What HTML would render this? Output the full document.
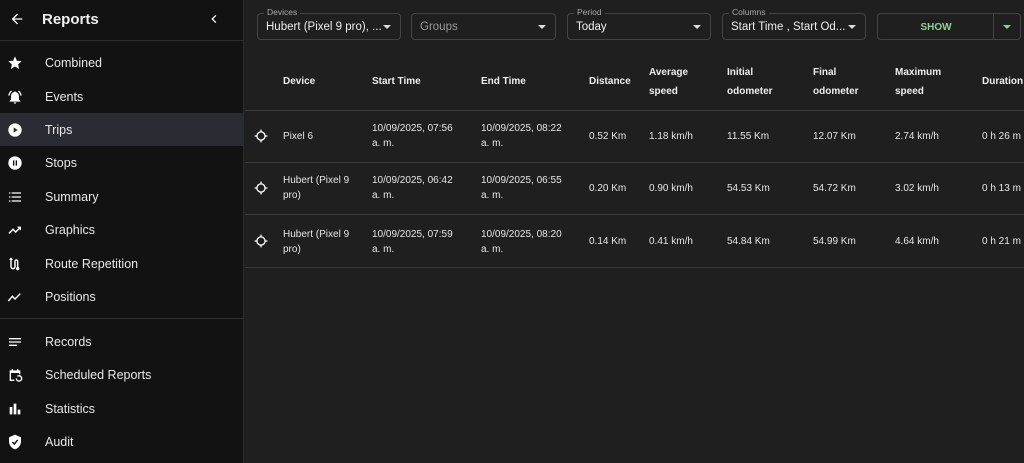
<!DOCTYPE html>
<html><head><meta charset="utf-8"><style>
*{margin:0;padding:0;box-sizing:border-box}
body{width:1024px;height:463px;overflow:hidden;background:#1f1f1f;font-family:"Liberation Sans",sans-serif;color:#eee;position:relative}
.sb{position:absolute;left:0;top:0;width:244px;height:463px;background:#121212;border-right:1px solid #2a2a2a}
.a{position:absolute}
.nav{position:absolute;left:0;width:244px;height:33px;font-size:12.5px;color:#e8e8e8}
.nav span{position:absolute;left:45px;top:10px}
.nav svg{position:absolute;left:7px;top:9px}
.sel{background:#2b2b33}
.hr{position:absolute;height:1px;background:#2e2e2e}
.f{position:absolute;top:13px;height:27px;border:1px solid #444;border-radius:4px}
.f .l{position:absolute;top:-7px;left:6px;font-size:8.5px;color:#aaa;background:#1f1f1f;padding:0 3px}
.f .v{position:absolute;left:8px;top:7px;font-size:11.5px;color:#eee;white-space:nowrap}
.f .c{position:absolute;right:9px;top:11px;width:0;height:0;border-left:4px solid transparent;border-right:4px solid transparent;border-top:4px solid #ddd}
.th{position:absolute;font-size:10px;font-weight:bold;color:#eee;line-height:19px}
.td{position:absolute;font-size:10px;color:#e6e6e6;line-height:15px}
</style></head><body>
<div class="sb">
<svg class="a" style="left:9px;top:11px" width="16" height="16" viewBox="0 0 24 24"><path d="M20 11H7.8l5.6-5.6L12 4l-8 8 8 8 1.4-1.4L7.8 13H20z" fill="#fff"/></svg>
<div class="a" style="left:42px;top:11px;font-size:15px;font-weight:bold;color:#f0f0f0">Reports</div>
<svg class="a" style="left:206px;top:11px" width="16" height="16" viewBox="0 0 24 24"><path d="M15.4 7.4 14 6l-6 6 6 6 1.4-1.4L10.8 12z" fill="#fff"/></svg>
<div class="hr" style="left:0;top:40px;width:244px"></div>
<div class="nav" style="top:46px"><svg width="16" height="16" viewBox="0 0 24 24"><path d="M12 17.3 18.2 21l-1.6-7L22 9.2l-7.2-.6L12 2 9.2 8.6 2 9.2 7.4 14l-1.6 7z" fill="#fff"/></svg><span>Combined</span></div>
<div class="nav" style="top:80px"><svg width="16" height="16" viewBox="0 0 24 24"><path d="M12 22c1.1 0 2-.9 2-2h-4c0 1.1.9 2 2 2zm6-6v-5c0-3.1-1.6-5.6-4.5-6.3V4h-3v.7C7.6 5.4 6 7.9 6 11v5l-2 2v1h16v-1zM7.6 3.6 6.2 2.2C3.8 4 2.2 6.8 2 10h2c.2-2.6 1.5-5 3.6-6.4zM20 10h2c-.2-3.2-1.8-6-4.2-7.8l-1.4 1.4c2.1 1.4 3.4 3.8 3.6 6.4z" fill="#fff"/></svg><span>Events</span></div>
<div class="nav sel" style="top:113px"><svg width="16" height="16" viewBox="0 0 24 24"><circle cx="12" cy="12" r="10" fill="#fff"/><path d="M10 8v8l6-4z" fill="#2b2b33"/></svg><span>Trips</span></div>
<div class="nav" style="top:146px"><svg width="16" height="16" viewBox="0 0 24 24"><circle cx="12" cy="12" r="10" fill="#fff"/><path d="M9 8h2v8H9zm4 0h2v8h-2z" fill="#121212"/></svg><span>Stops</span></div>
<div class="nav" style="top:180px"><svg width="16" height="16" viewBox="0 0 24 24"><path d="M3 5h2v2H3zm4 0h14v2H7zM3 11h2v2H3zm4 0h14v2H7zM3 17h2v2H3zm4 0h14v2H7z" fill="#fff"/></svg><span>Summary</span></div>
<div class="nav" style="top:213px"><svg width="16" height="16" viewBox="0 0 24 24"><path d="M3 17l6-6 4 4 7-7" stroke="#fff" stroke-width="2.2" fill="none"/><path d="M15 7h6v6z" fill="#fff"/></svg><span>Graphics</span></div>
<div class="nav" style="top:247px"><svg width="16" height="16" viewBox="0 0 24 24"><path d="M6 3v13a3 3 0 0 0 6 0V8a2 2 0 0 1 4 0v10" stroke="#fff" stroke-width="2.2" fill="none"/><circle cx="16" cy="19" r="2.5" fill="#fff"/><path d="M3 6l3-4 3 4z" fill="#fff"/></svg><span>Route Repetition</span></div>
<div class="nav" style="top:280px"><svg width="16" height="16" viewBox="0 0 24 24"><path d="M2 18l6-7 4 4 8-8" stroke="#fff" stroke-width="2.2" fill="none"/></svg><span>Positions</span></div>
<div class="hr" style="left:0;top:318px;width:244px"></div>
<div class="nav" style="top:325px"><svg width="16" height="16" viewBox="0 0 24 24"><path d="M3 6h18v2H3zm0 5h18v2H3zm0 5h12v2H3z" fill="#fff"/></svg><span>Records</span></div>
<div class="nav" style="top:358px"><svg width="16" height="16" viewBox="0 0 24 24"><path d="M4 5h16v6h-2V9H6v10h5v2H4zM7 3h2v3H7zm8 0h2v3h-2z" fill="#fff"/><path d="M14 17a4 4 0 1 0 1.5-3" stroke="#fff" stroke-width="2" fill="none"/></svg><span>Scheduled Reports</span></div>
<div class="nav" style="top:392px"><svg width="16" height="16" viewBox="0 0 24 24"><path d="M4 9h4v11H4zm6-5h4v16h-4zm6 9h4v7h-4z" fill="#fff"/></svg><span>Statistics</span></div>
<div class="nav" style="top:425px"><svg width="16" height="16" viewBox="0 0 24 24"><path d="M12 1 3 5v6c0 5.5 3.8 10.7 9 12 5.2-1.3 9-6.5 9-12V5z" fill="#fff"/><path d="M8 12l3 3 5-6" stroke="#121212" stroke-width="2.2" fill="none"/></svg><span>Audit</span></div>
</div>

<div class="f" style="left:257px;width:144px"><span class="l">Devices</span><span class="v">Hubert (Pixel 9 pro), ...</span><i class="c"></i></div>
<div class="f" style="left:411px;width:145px"><span class="v" style="color:#999">Groups</span><i class="c"></i></div>
<div class="f" style="left:567px;width:144px"><span class="l">Period</span><span class="v">Today</span><i class="c"></i></div>
<div class="f" style="left:722px;width:144px"><span class="l">Columns</span><span class="v">Start Time , Start Od...</span><i class="c"></i></div>
<div class="f" style="left:877px;width:144px"><span class="v" style="left:0;width:116px;text-align:center;font-size:10px;top:8px;color:#8fcf8f;font-weight:bold">SHOW</span><div class="a" style="left:115px;top:0;width:1px;height:25px;background:#444"></div><i class="c" style="border-top-color:#8fcf8f"></i></div>

<div class="th" style="left:283px;top:72px">Device</div>
<div class="th" style="left:372px;top:72px">Start Time</div>
<div class="th" style="left:481px;top:72px">End Time</div>
<div class="th" style="left:589px;top:72px">Distance</div>
<div class="th" style="left:649px;top:63px">Average<br>speed</div>
<div class="th" style="left:727px;top:63px">Initial<br>odometer</div>
<div class="th" style="left:813px;top:63px">Final<br>odometer</div>
<div class="th" style="left:895px;top:63px">Maximum<br>speed</div>
<div class="th" style="left:982px;top:72px">Duration</div>
<div class="hr" style="left:245px;top:110px;width:779px;background:#3a3a3a"></div>
<div class="hr" style="left:245px;top:162px;width:779px;background:#3a3a3a"></div>
<div class="hr" style="left:245px;top:214px;width:779px;background:#3a3a3a"></div>
<div class="hr" style="left:245px;top:267px;width:779px;background:#3a3a3a"></div>

<svg class="a" style="left:254px;top:129px" width="14" height="14" viewBox="0 0 24 24"><circle cx="12" cy="12" r="7" stroke="#fff" stroke-width="2.2" fill="none"/><path d="M12 1v4M12 19v4M1 12h4M19 12h4" stroke="#fff" stroke-width="2.2"/></svg>
<div class="td" style="left:283px;top:129px">Pixel 6</div>
<div class="td" style="left:372px;top:121px">10/09/2025, 07:56<br>a. m.</div>
<div class="td" style="left:481px;top:121px">10/09/2025, 08:22<br>a. m.</div>
<div class="td" style="left:589px;top:129px">0.52 Km</div>
<div class="td" style="left:649px;top:129px">1.18 km/h</div>
<div class="td" style="left:727px;top:129px">11.55 Km</div>
<div class="td" style="left:813px;top:129px">12.07 Km</div>
<div class="td" style="left:895px;top:129px">2.74 km/h</div>
<div class="td" style="left:982px;top:129px">0 h 26 m</div>
<svg class="a" style="left:254px;top:181px" width="14" height="14" viewBox="0 0 24 24"><circle cx="12" cy="12" r="7" stroke="#fff" stroke-width="2.2" fill="none"/><path d="M12 1v4M12 19v4M1 12h4M19 12h4" stroke="#fff" stroke-width="2.2"/></svg>
<div class="td" style="left:283px;top:173px">Hubert (Pixel 9<br>pro)</div>
<div class="td" style="left:372px;top:173px">10/09/2025, 06:42<br>a. m.</div>
<div class="td" style="left:481px;top:173px">10/09/2025, 06:55<br>a. m.</div>
<div class="td" style="left:589px;top:181px">0.20 Km</div>
<div class="td" style="left:649px;top:181px">0.90 km/h</div>
<div class="td" style="left:727px;top:181px">54.53 Km</div>
<div class="td" style="left:813px;top:181px">54.72 Km</div>
<div class="td" style="left:895px;top:181px">3.02 km/h</div>
<div class="td" style="left:982px;top:181px">0 h 13 m</div>
<svg class="a" style="left:254px;top:234px" width="14" height="14" viewBox="0 0 24 24"><circle cx="12" cy="12" r="7" stroke="#fff" stroke-width="2.2" fill="none"/><path d="M12 1v4M12 19v4M1 12h4M19 12h4" stroke="#fff" stroke-width="2.2"/></svg>
<div class="td" style="left:283px;top:227px">Hubert (Pixel 9<br>pro)</div>
<div class="td" style="left:372px;top:227px">10/09/2025, 07:59<br>a. m.</div>
<div class="td" style="left:481px;top:227px">10/09/2025, 08:20<br>a. m.</div>
<div class="td" style="left:589px;top:234px">0.14 Km</div>
<div class="td" style="left:649px;top:234px">0.41 km/h</div>
<div class="td" style="left:727px;top:234px">54.84 Km</div>
<div class="td" style="left:813px;top:234px">54.99 Km</div>
<div class="td" style="left:895px;top:234px">4.64 km/h</div>
<div class="td" style="left:982px;top:234px">0 h 21 m</div>
</body></html>
